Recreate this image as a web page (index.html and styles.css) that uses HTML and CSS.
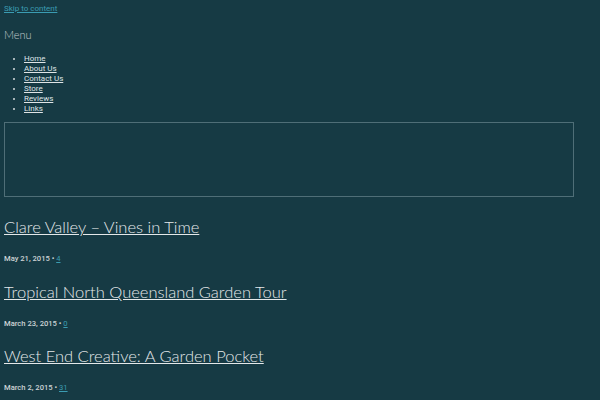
FILE: index.html
```html
<!DOCTYPE html>
<html>
<head>
<meta charset="utf-8">
<link rel="stylesheet" href="styles.css">
</head>
<body>
<a class="skip" href="#content">Skip to content</a>
<div class="menu-title">Menu</div>
<ul class="nav">
  <li><a href="#">Home</a></li>
  <li><a href="#">About Us</a></li>
  <li><a href="#">Contact Us</a></li>
  <li><a href="#">Store</a></li>
  <li><a href="#">Reviews</a></li>
  <li><a href="#">Links</a></li>
</ul>
<div class="banner"></div>
<main id="content" class="posts">
  <article class="post">
    <h2 class="post-title"><a href="#">Clare Valley – Vines in Time</a></h2>
    <div class="meta">May 21, 2015 • <a href="#">4</a></div>
  </article>
  <article class="post">
    <h2 class="post-title"><a href="#">Tropical North Queensland Garden Tour</a></h2>
    <div class="meta">March 23, 2015 • <a href="#">0</a></div>
  </article>
  <article class="post">
    <h2 class="post-title"><a href="#">West End Creative: A Garden Pocket</a></h2>
    <div class="meta">March 2, 2015 • <a href="#">31</a></div>
  </article>
</main>
</body>
</html>
```
FILE: styles.css
```css
html, body {
  margin: 0;
  padding: 0;
  background: #163a44;
}
body {
  padding: 4px 4px;
  color: #d6dcde;
  font-family: "Roboto", "Liberation Sans", sans-serif;
}
.skip {
  display: block;
  font-size: 8px;
  line-height: 10px;
  color: #3b9cb2;
}
.menu-title {
  margin-top: 14px;
  font-family: "Lato", sans-serif;
  font-size: 11px;
  line-height: 14px;
  color: #c3cbce;
  font-weight: 300;
}
.nav {
  margin: 12px 0 0;
  padding-left: 20px;
  font-size: 8px;
  line-height: 10px;
}
.nav a {
  color: #dfe4e6;
}
.banner {
  margin-top: 8px;
  width: 568px;
  height: 73px;
  border: 1px solid #4f6e77;
}
.posts {
  margin-top: 19px;
}
.post {
  height: 64.5px;
}
.post-title {
  margin: 0;
  font-family: "Lato", sans-serif;
  font-size: 16.5px;
  line-height: 22px;
  font-weight: 300;
}
.post-title a {
  color: #e4e8ea;
}
.meta {
  margin-top: 16px;
  font-size: 7.6px;
  line-height: 10px;
  font-weight: 500;
  color: #cdd4d6;
}
.meta a {
  color: #3b9cb2;
  font-weight: 400;
}
```
